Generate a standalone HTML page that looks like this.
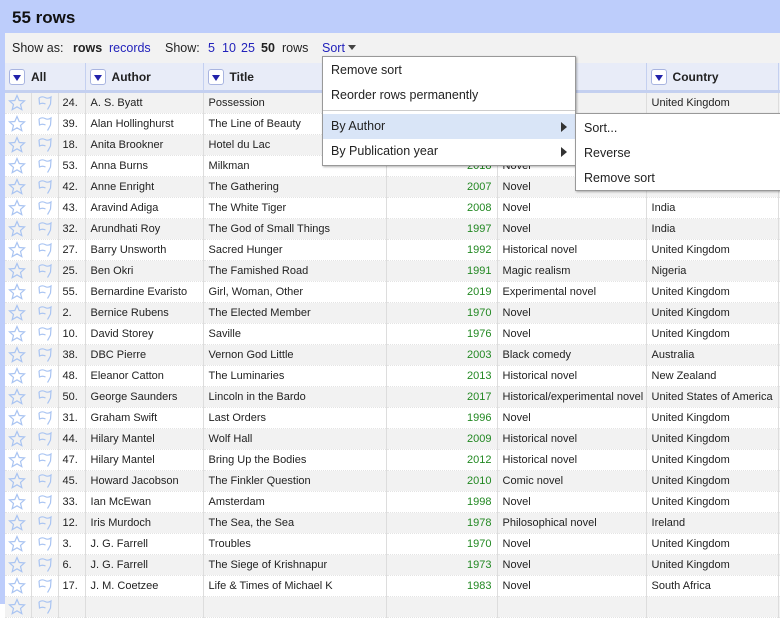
<!DOCTYPE html>
<html><head><meta charset="utf-8"><style>
*{margin:0;padding:0;box-sizing:border-box}
body{width:780px;height:604px;overflow:hidden;background:#fff;font-family:"Liberation Sans",Arial,sans-serif;position:relative}
#strip{position:absolute;left:0;top:0;width:5px;height:604px;background:#bdcdfb}
#hdr{position:absolute;left:0;top:0;width:780px;height:33px;background:#bdcdfb}
#hdr h1{position:absolute;left:12px;top:8px;font-size:17px;font-weight:bold;color:#111}
#bar{position:absolute;left:5px;top:33px;width:775px;height:30px;background:#f2f2f2;font-size:12.5px;color:#222}
#bar span{position:absolute;top:8px}
.lk{color:#2222bb}
table{position:absolute;left:5px;top:63px;width:775px;border-collapse:collapse;font-size:11px;color:#222;table-layout:fixed}
th{height:28px;background:#e8ecf8;border-right:1px solid #c4d0f0;border-bottom:3px solid #c4d0f0;text-align:left;font-size:12px;font-weight:bold;padding:4px 0 0 4px;white-space:nowrap}
td{height:21px;line-height:20px;border-right:1px solid #ddd;padding:0 0 0 5px;white-space:nowrap;overflow:hidden;border-bottom:1px dotted #e4e4e4}
td svg{display:block}
#tb tr:nth-child(odd) td{background:#f2f2f2}
td.y{text-align:right;color:#228822;padding-right:5px;padding-left:0}
td.n{padding-left:4px}
.dd{display:inline-block;width:16px;height:16px;border:1px solid #a8b4e0;background:#fff;border-radius:3px;vertical-align:middle;margin-right:6px;position:relative;top:-1px}
.dd:after{content:"";position:absolute;left:3px;top:5px;border-left:4px solid transparent;border-right:4px solid transparent;border-top:6px solid #2222aa}
.menu{position:absolute;background:#fff;border:1px solid #999;box-shadow:1px 1px 2px rgba(0,0,0,.3);font-size:12.5px;color:#222}
.mi{position:absolute;left:0;right:0;height:25px;padding-left:8px;line-height:25px}
.arr{position:absolute;right:8px;top:8px;border-top:5px solid transparent;border-bottom:5px solid transparent;border-left:6px solid #333}
</style></head><body>
<div id="hdr"><h1>55 rows</h1></div>
<div id="strip"></div>
<div id="bar">
<span style="left:7px">Show as:</span><span style="left:68px;font-weight:bold">rows</span><span class="lk" style="left:104px">records</span>
<span style="left:160px">Show:</span><span class="lk" style="left:203px">5</span><span class="lk" style="left:217px">10</span><span class="lk" style="left:236px">25</span><span style="left:256px;font-weight:bold">50</span><span style="left:277px">rows</span>
<span class="lk" style="left:317px">Sort <span style="position:relative;top:-2px;display:inline-block;border-left:4px solid transparent;border-right:4px solid transparent;border-top:5px solid #444"></span></span>
</div>
<table>
<colgroup><col style="width:26px"><col style="width:27px"><col style="width:27px"><col style="width:118px"><col style="width:183px"><col style="width:111px"><col style="width:149px"><col style="width:132px"><col style="width:2px"></colgroup>
<thead><tr><th colspan="3"><span class="dd"></span>All</th><th><span class="dd"></span>Author</th><th><span class="dd"></span>Title</th><th></th><th></th><th><span class="dd"></span>Country</th><th></th></tr></thead>
<tbody id="tb"></tbody>
</table>
<div class="menu" style="left:322px;top:56px;width:254px;height:110px">
<div class="mi" style="top:1px">Remove sort</div>
<div class="mi" style="top:26px">Reorder rows permanently</div>
<div style="position:absolute;left:0;right:0;top:53px;border-top:1px solid #ccc"></div>
<div class="mi" style="top:57px;background:#d9e5f7">By Author<div class="arr"></div></div>
<div class="mi" style="top:82px">By Publication year<div class="arr"></div></div>
</div>
<div class="menu" style="left:575px;top:113px;width:210px;height:78px">
<div class="mi" style="top:2px">Sort...</div>
<div class="mi" style="top:27px">Reverse</div>
<div class="mi" style="top:52px">Remove sort</div>
</div>
<script>
var d=[["24.","A. S. Byatt","Possession","","","United Kingdom"],
["39.","Alan Hollinghurst","The Line of Beauty","","",""],
["18.","Anita Brookner","Hotel du Lac","","",""],
["53.","Anna Burns","Milkman","2018","Novel",""],
["42.","Anne Enright","The Gathering","2007","Novel",""],
["43.","Aravind Adiga","The White Tiger","2008","Novel","India"],
["32.","Arundhati Roy","The God of Small Things","1997","Novel","India"],
["27.","Barry Unsworth","Sacred Hunger","1992","Historical novel","United Kingdom"],
["25.","Ben Okri","The Famished Road","1991","Magic realism","Nigeria"],
["55.","Bernardine Evaristo","Girl, Woman, Other","2019","Experimental novel","United Kingdom"],
["2.","Bernice Rubens","The Elected Member","1970","Novel","United Kingdom"],
["10.","David Storey","Saville","1976","Novel","United Kingdom"],
["38.","DBC Pierre","Vernon God Little","2003","Black comedy","Australia"],
["48.","Eleanor Catton","The Luminaries","2013","Historical novel","New Zealand"],
["50.","George Saunders","Lincoln in the Bardo","2017","Historical/experimental novel","United States of America"],
["31.","Graham Swift","Last Orders","1996","Novel","United Kingdom"],
["44.","Hilary Mantel","Wolf Hall","2009","Historical novel","United Kingdom"],
["47.","Hilary Mantel","Bring Up the Bodies","2012","Historical novel","United Kingdom"],
["45.","Howard Jacobson","The Finkler Question","2010","Comic novel","United Kingdom"],
["33.","Ian McEwan","Amsterdam","1998","Novel","United Kingdom"],
["12.","Iris Murdoch","The Sea, the Sea","1978","Philosophical novel","Ireland"],
["3.","J. G. Farrell","Troubles","1970","Novel","United Kingdom"],
["6.","J. G. Farrell","The Siege of Krishnapur","1973","Novel","United Kingdom"],
["17.","J. M. Coetzee","Life & Times of Michael K","1983","Novel","South Africa"],
["","","","","",""]];
var star='<svg width="18" height="18" viewBox="0 0 18 18"><path d="M9 1.5l2.2 5 5.3.4-4 3.5 1.3 5.2L9 12.8l-4.8 2.8 1.3-5.2-4-3.5 5.3-.4z" fill="none" stroke="#a9c4f2" stroke-width="1.2"/></svg>';
var flag='<svg width="18" height="18" viewBox="0 0 18 18"><path d="M3 4c2-1.5 4-1.5 6-.5s4 1 6-.5l-.5 7c-1 2-2 4-3 5.5M3 4l.5 6c2-1 4-1 6 0" fill="none" stroke="#a9c4f2" stroke-width="1.2"/></svg>';
var h='';d.forEach(function(r){h+='<tr><td style="padding-left:3px">'+star+'</td><td style="padding-left:4px">'+flag+'</td><td class="n">'+r[0]+'</td><td>'+r[1]+'</td><td>'+r[2]+'</td><td class="y">'+r[3]+'</td><td>'+r[4]+'</td><td>'+r[5]+'</td><td></td></tr>'});
document.getElementById('tb').innerHTML=h;
</script>
</body></html>
